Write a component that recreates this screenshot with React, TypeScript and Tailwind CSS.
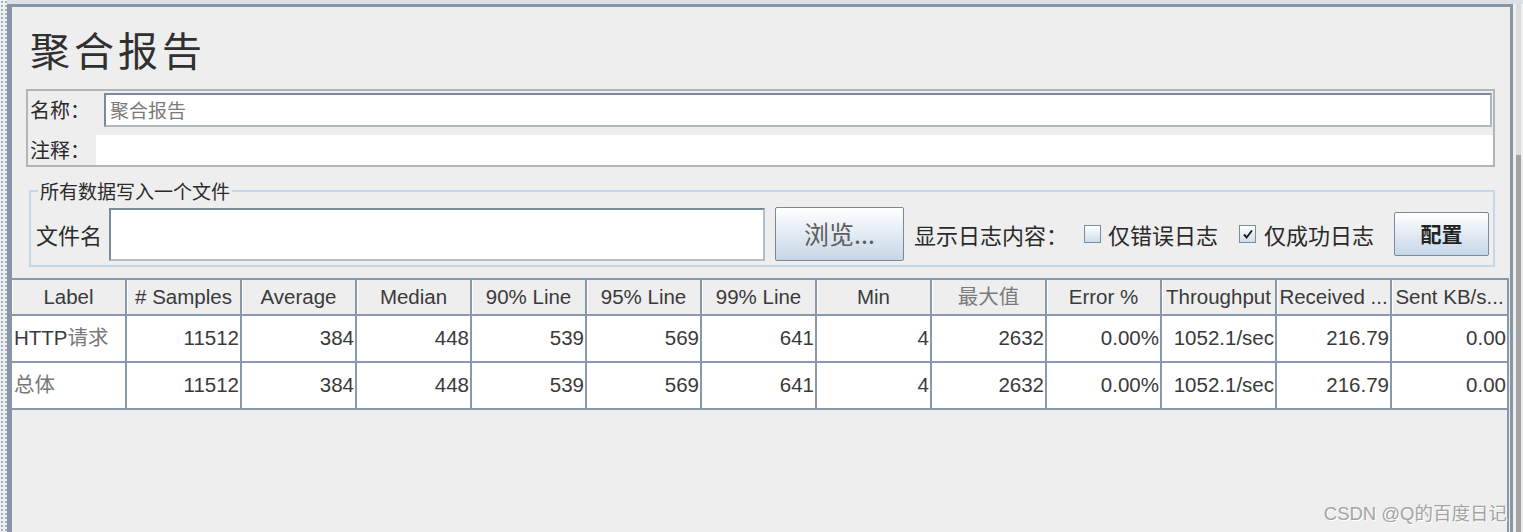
import React from 'react';

const cjk = "font-['Noto_Sans_CJK_SC',sans-serif]";
const tableFont = "font-['Liberation_Sans','Noto_Sans_CJK_SC',sans-serif]";

const headers: Array<{ text: string; muted?: boolean }> = [
  { text: 'Label' },
  { text: '# Samples' },
  { text: 'Average' },
  { text: 'Median' },
  { text: '90% Line' },
  { text: '95% Line' },
  { text: '99% Line' },
  { text: 'Min' },
  { text: '最大值', muted: true },
  { text: 'Error %' },
  { text: 'Throughput' },
  { text: 'Received ...' },
  { text: 'Sent KB/s...' },
];

// rows of the aggregate report
const rows = [
  { label: 'HTTP', labelCn: '请求', values: ['11512', '384', '448', '539', '569', '641', '4', '2632', '0.00%', '1052.1/sec', '216.79', '0.00'] },
  { label: '', labelCn: '总体', values: ['11512', '384', '448', '539', '569', '641', '4', '2632', '0.00%', '1052.1/sec', '216.79', '0.00'] },
];

function Checkbox({ checked }: { checked?: boolean }) {
  return (
    <div className="w-[17px] h-[18px] border border-[#7d8c9c] bg-linear-to-b from-white to-[#cfdcea] flex items-center justify-center">
      {checked && (
        <svg width="12" height="12" viewBox="0 0 12 12">
          <path d="M2 6.5 L4.6 9.5 L10 2.5" fill="none" stroke="#1f1f1f" strokeWidth="2" />
        </svg>
      )}
    </div>
  );
}

export default function App() {
  return (
    <div className="w-[1523px] h-[532px] flex bg-[#eeeeee] overflow-hidden relative">
      {/* splitter dots */}
      <div className="w-[7px] h-full bg-[#eef0f2] bg-[radial-gradient(circle,#a7b1bc_0.9px,transparent_1.1px)] bg-[length:4px_4px]"></div>

      <div className="flex flex-col w-[1506px] h-full">
        <div className="h-[4px] bg-[#dde1e5]"></div>
        <div className="flex-1 flex flex-col border-t-[3px] border-l-[5px] border-r-[3px] border-[#8796a7] min-h-0">
          {/* title */}
          <div className={`${cjk} pt-[14px] pl-[18px] text-[40px] leading-[56px] tracking-[4px] text-[#303030]`}>聚合报告</div>

          {/* name / comment */}
          <div className={`${cjk} mt-[12px] ml-[14px] w-[1469px] border-2 border-[#b4b4b4] flex flex-col`}>
            <div className="h-[44px] flex items-start pt-[2px]">
              <div className="w-[76px] h-[34px] pl-[2px] flex items-center text-[20px] text-[#2a2a2a]">名称：</div>
              <div className="flex-1 mr-[1px] h-[34px] bg-white border-2 border-t-[#7b8a9b] border-l-[#7b8a9b] border-b-[#aeb8c3] border-r-[#aeb8c3] flex items-center pl-[4px] text-[19px] text-[#7a7a7a]">
                聚合报告
              </div>
            </div>
            <div className="h-[30px] flex">
              <div className="w-[68px] pl-[2px] flex items-center text-[20px] text-[#2a2a2a]">注释：</div>
              <div className="flex-1 bg-white"></div>
            </div>
          </div>

          {/* write all data to a file */}
          <fieldset className={`${cjk} mt-[14px] ml-[17px] w-[1466px] border-2 border-[#c4d7ea] pl-[5px] pr-[4px] pt-[6px] pb-[4px]`}>
            <legend className="ml-[2px] px-[2px] text-[19px] leading-[20px] text-[#2a2a2a]">所有数据写入一个文件</legend>
            <div className="h-[54px] flex items-center">
              <div className="text-[22px] text-[#2a2a2a] w-[68px]">文件名</div>
              <div className="ml-[5px] w-[656px] h-[53px] bg-white border-2 border-t-[#7b8a9b] border-l-[#7b8a9b] border-b-[#b4bec8] border-r-[#b4bec8]"></div>
              <div className="ml-[10px] w-[129px] h-[54px] rounded-[2px] border border-[#7a8898] bg-linear-to-b from-white to-[#c6d6e7] flex items-center justify-center text-[25px] text-[#5e5e5e]">
                浏览...
              </div>
              <div className="ml-[10px] text-[22px] text-[#2a2a2a] whitespace-nowrap">显示日志内容：</div>
              <div className="ml-[16px]">
                <Checkbox />
              </div>
              <div className="ml-[7px] text-[22px] text-[#2a2a2a] whitespace-nowrap">仅错误日志</div>
              <div className="ml-[21px]">
                <Checkbox checked />
              </div>
              <div className="ml-[8px] text-[22px] text-[#2a2a2a] whitespace-nowrap">仅成功日志</div>
              <div className="ml-auto w-[95px] h-[44px] rounded-[2px] border border-[#7a8898] bg-linear-to-b from-white to-[#c6d6e7] flex items-center justify-center text-[21px] font-bold text-[#222222]">
                配置
              </div>
            </div>
          </fieldset>

          {/* results table */}
          <div className={`${tableFont} mt-[11px] mr-[1px] flex-1 min-h-0 border-t-2 border-r-2 border-[#8a99a9] flex flex-col`}>
            <div className="grid grid-cols-13 h-[36px] border-b-2 border-[#8a99a9]">
              {headers.map((h, i) => (
                <div
                  key={i}
                  className={`flex items-center justify-center whitespace-nowrap overflow-hidden bg-[#eeeeee] shadow-[inset_1px_0_0_#ffffff] text-[20.5px] ${i < headers.length - 1 ? 'border-r-2 border-[#8a99a9]' : ''} ${h.muted ? 'text-[#7b7b7b]' : 'text-[#3a3a3a]'}`}
                >
                  {h.text}
                </div>
              ))}
            </div>
            {rows.map((r, ri) => (
              <div key={ri} className="grid grid-cols-13 h-[47px] bg-white border-b-2 border-[#8a99a9]">
                <div className="flex items-center pl-[2px] whitespace-nowrap text-[20.5px] border-r-2 border-[#8a99a9]">
                  <span className="text-[#3a3a3a]">{r.label}</span>
                  <span className="text-[#777777]">{r.labelCn}</span>
                </div>
                {r.values.map((v, vi) => (
                  <div
                    key={vi}
                    className={`flex items-center justify-end pr-[1px] whitespace-nowrap overflow-hidden text-[20.5px] text-[#3a3a3a] ${vi < r.values.length - 1 ? 'border-r-2 border-[#8a99a9]' : ''}`}
                  >
                    {v}
                  </div>
                ))}
              </div>
            ))}
            <div className="flex-1 bg-[#eeeeee]"></div>
          </div>
        </div>
      </div>

      {/* vertical scrollbar */}
      <div className="flex-1 flex flex-col">
        <div className="h-[4px] bg-[#dde1e5]"></div>
        <div className="flex-1 flex pl-[3px]">
          <div className="w-[5px] h-full flex flex-col bg-[#dcdcdc]">
            <div className="h-[151px]"></div>
            <div className="flex-1 bg-[#a3a3a3]"></div>
          </div>
        </div>
      </div>

      {/* watermark */}
      <div className="absolute right-[16px] bottom-[7px] font-['Liberation_Sans','Noto_Sans_CJK_SC',sans-serif] text-[18.5px] leading-[22px] text-[#a3a3a3] [text-shadow:1px_1px_0_#ffffff]">
        CSDN @Q的百度日记
      </div>
    </div>
  );
}
